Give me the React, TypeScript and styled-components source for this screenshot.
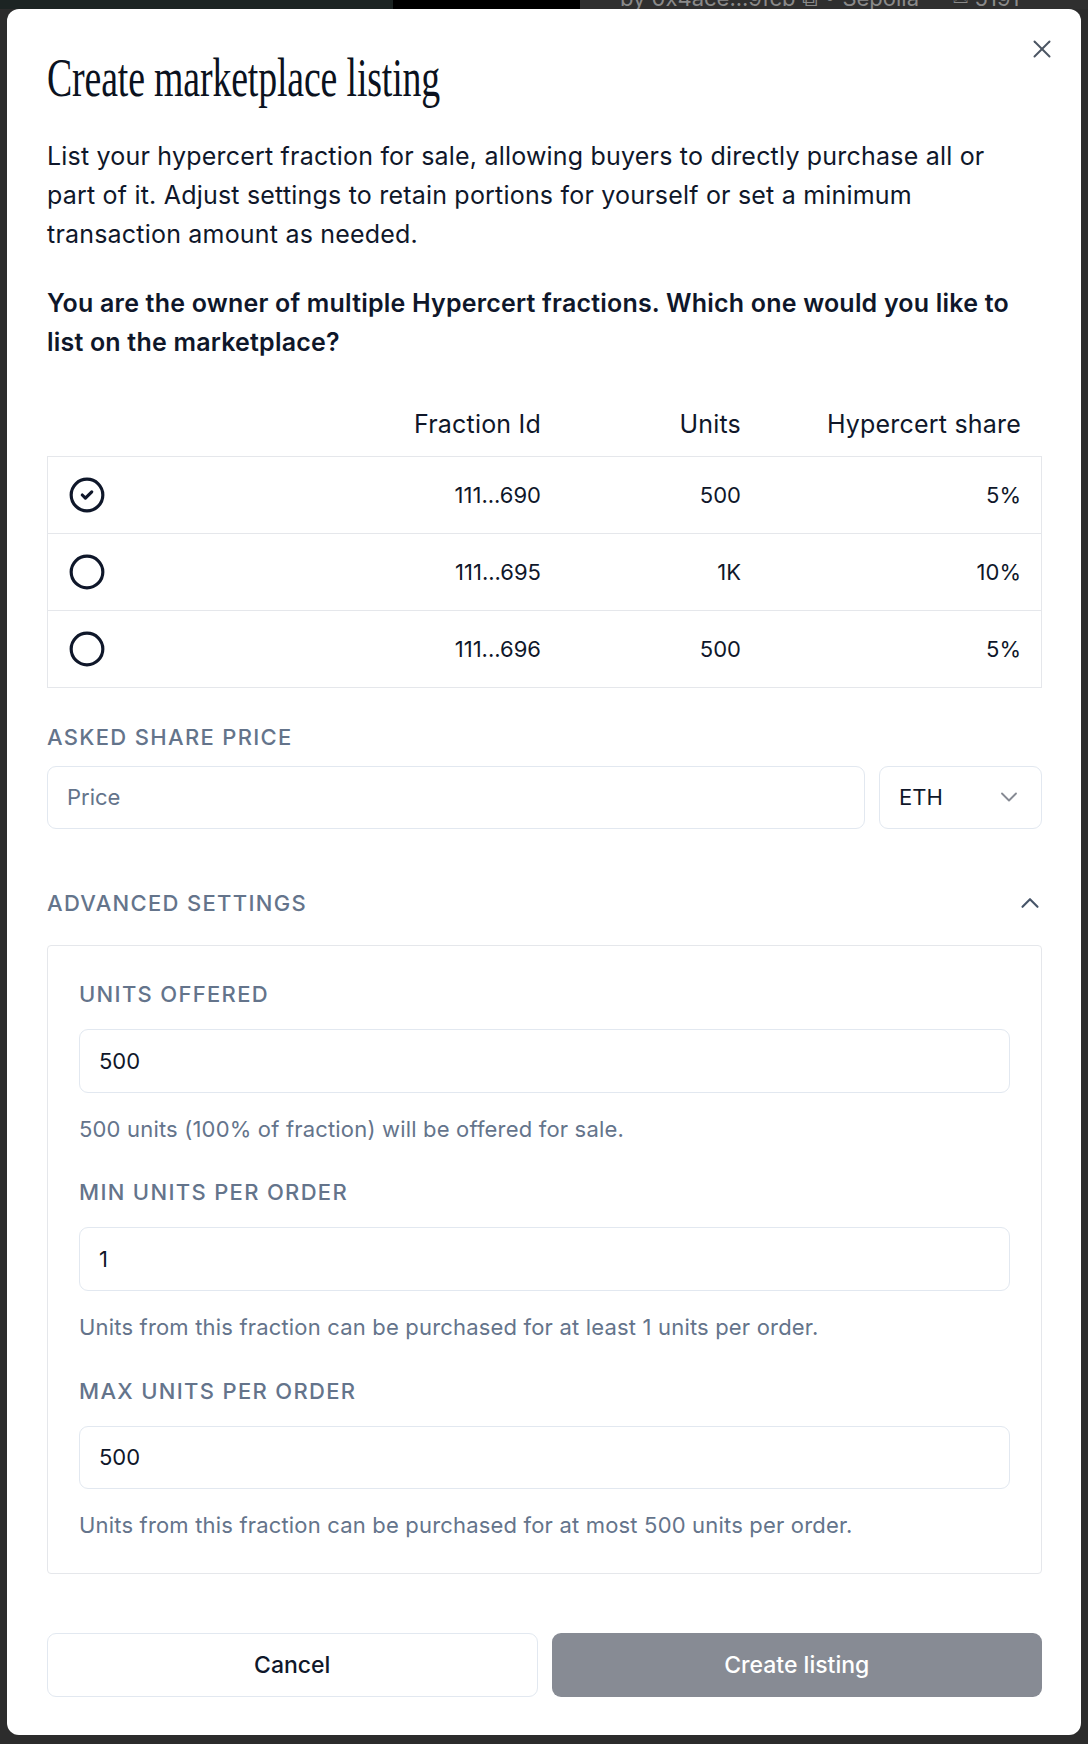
import React, { useState } from "react";
import styled, { createGlobalStyle } from "styled-components";
import { Circle, CircleCheck, ChevronDown, ChevronUp, X } from "lucide-react";

const GlobalStyle = createGlobalStyle`
  * { box-sizing: border-box; }
  body {
    margin: 0;
    background: #2c2c2c;
    font-family: Inter, "Noto Sans", sans-serif;
    color: #0f172a;
  }
`;

const Page = styled.div`
  display: flex;
  flex-direction: column;
  min-height: 1744px;
`;

// the page behind the dialog, only a sliver shows above it
const Backdrop = styled.div`
  display: flex;
  height: 9px;
  overflow: hidden;
`;

const BackdropBlock = styled.div<{ $bg: string; $width?: number }>`
  background: ${(p) => p.$bg};
  width: ${(p) => (p.$width ? `${p.$width}px` : "auto")};
  flex: ${(p) => (p.$width ? "none" : "1")};
  padding-left: 40px;
`;

const BackdropText = styled.div`
  margin-top: -17px;
  font-size: 22px;
  line-height: 30px;
  color: #8a8a8a;
  white-space: nowrap;
`;

const Modal = styled.div`
  position: relative;
  margin: 0 7px 10px;
  background: #ffffff;
  border-radius: 12px;
  padding: 40px 39px 38px 40px;
  display: flex;
  flex-direction: column;
`;

const CloseButton = styled.button`
  position: absolute;
  top: 25px;
  right: 24px;
  width: 30px;
  height: 30px;
  padding: 0;
  border: none;
  background: none;
  color: #4b5563;
  display: flex;
  align-items: center;
  justify-content: center;
  cursor: pointer;

  svg {
    flex: none;
  }
`;

const Title = styled.h2`
  margin: 2px 0 0;
  font-family: "Liberation Serif", "Times New Roman", serif;
  font-weight: 400;
  font-size: 54px;
  line-height: 54px;
  letter-spacing: -0.2px;
  color: #0b1220;
  white-space: nowrap;
  transform: scaleX(0.7);
  transform-origin: left center;
`;

const Paragraph = styled.p<{ $bold?: boolean; $top: number }>`
  margin: ${(p) => p.$top}px 0 0;
  max-width: ${(p) => (p.$bold ? "none" : "975px")};
  font-size: 25px;
  line-height: 38.9px;
  letter-spacing: 0.2px;
  font-weight: ${(p) => (p.$bold ? 600 : 400)};
  color: #0f172a;
`;

const TableHead = styled.div`
  margin-top: 30px;
  height: 64px;
  display: grid;
  grid-template-columns: 1fr 200px 200px 280px;
  align-items: center;
  padding: 0 21px;
  font-size: 25px;
  letter-spacing: 0.2px;
  color: #0f172a;
`;

const TableBox = styled.div`
  border: 1px solid #e5e7eb;
`;

const TableRow = styled.div`
  height: 77px;
  display: grid;
  grid-template-columns: 1fr 200px 200px 280px;
  align-items: center;
  padding: 0 20px;
  font-size: 22px;
  color: #0f172a;
  border-top: 1px solid #e5e7eb;
  cursor: pointer;

  &:first-child {
    border-top: none;
    height: 76px;
  }
`;

const Cell = styled.div<{ $right?: boolean }>`
  display: flex;
  justify-content: ${(p) => (p.$right ? "flex-end" : "flex-start")};
  align-items: center;
`;

const Label = styled.div<{ $top: number }>`
  margin-top: ${(p) => p.$top}px;
  font-size: 22px;
  line-height: 30px;
  letter-spacing: 0.06em;
  text-transform: uppercase;
  color: #64748b;
  font-weight: 500;
`;

const PriceRow = styled.div`
  margin-top: 14px;
  display: flex;
  gap: 14px;
`;

const Input = styled.input<{ $height?: number }>`
  flex: 1;
  width: 100%;
  height: ${(p) => p.$height ?? 64}px;
  border: 1px solid #e2e8f0;
  border-radius: 9px;
  padding: 0 19px;
  font-family: Inter, "Noto Sans", sans-serif;
  font-size: 22px;
  color: #0f172a;
  outline: none;
  background: #fff;

  &::placeholder {
    color: #64748b;
  }
`;

const Select = styled.button`
  width: 163px;
  height: 63px;
  border: 1px solid #e2e8f0;
  border-radius: 9px;
  background: #fff;
  padding: 0 18px 0 19px;
  display: flex;
  align-items: center;
  justify-content: space-between;
  font-family: Inter, "Noto Sans", sans-serif;
  font-size: 22px;
  color: #0f172a;
  cursor: pointer;

  svg {
    flex: none;
    opacity: 0.5;
  }
`;

const AdvancedHeader = styled.button`
  margin-top: 59px;
  height: 30px;
  padding: 0;
  border: none;
  background: none;
  display: flex;
  align-items: center;
  justify-content: space-between;
  cursor: pointer;
  font-family: Inter, "Noto Sans", sans-serif;
  color: #475569;

  svg {
    flex: none;
    margin-right: -3px;
  }
`;

const AdvancedTitle = styled.span`
  font-size: 22px;
  letter-spacing: 0.06em;
  text-transform: uppercase;
  color: #64748b;
  font-weight: 500;
`;

const AdvancedBox = styled.div`
  margin-top: 27px;
  border: 1px solid #e5e7eb;
  border-radius: 4px;
  padding: 0 31px 33px;
  display: flex;
  flex-direction: column;
`;

const FieldInput = styled(Input)`
  margin-top: 20px;
  flex: none;
`;

const Help = styled.div`
  margin-top: 21px;
  font-size: 22px;
  line-height: 30px;
  letter-spacing: 0.18px;
  color: #64748b;
`;

const Footer = styled.div`
  margin-top: 59px;
  display: grid;
  grid-template-columns: 1fr 1fr;
  gap: 14px;
`;

const Button = styled.button<{ $primary?: boolean }>`
  height: 64px;
  border-radius: 9px;
  border: ${(p) => (p.$primary ? "none" : "1px solid #e2e8f0")};
  background: ${(p) => (p.$primary ? "#878b94" : "#ffffff")};
  color: ${(p) => (p.$primary ? "#ffffff" : "#0f172a")};
  font-family: Inter, "Noto Sans", sans-serif;
  font-size: 23px;
  font-weight: 500;
  cursor: ${(p) => (p.$primary ? "not-allowed" : "pointer")};
`;

const fractions = [
  { id: "111...690", units: "500", share: "5%" },
  { id: "111...695", units: "1K", share: "10%" },
  { id: "111...696", units: "500", share: "5%" },
];

export default function App() {
  const [selected, setSelected] = useState(0);
  const [open, setOpen] = useState(true);

  return (
    <Page>
      <GlobalStyle />
      <Backdrop>
        <BackdropBlock $bg="#1c2423" $width={393} />
        <BackdropBlock $bg="#000000" $width={187} />
        <BackdropBlock $bg="#2f2f2f">
          <BackdropText>by 0x4ace...9fcb ⧉ • Sepolia — ✉ 5191</BackdropText>
        </BackdropBlock>
      </Backdrop>

      <Modal>
        <CloseButton aria-label="Close">
          <X size={30} strokeWidth={1.6} />
        </CloseButton>

        <Title>Create marketplace listing</Title>

        <Paragraph $top={32}>
          List your hypercert fraction for sale, allowing buyers to directly
          purchase all or part of it. Adjust settings to retain portions for
          yourself or set a minimum transaction amount as needed.
        </Paragraph>

        <Paragraph $top={30} $bold>
          You are the owner of multiple Hypercert fractions. Which one would
          you like to list on the marketplace?
        </Paragraph>

        <TableHead>
          <Cell />
          <Cell $right>Fraction Id</Cell>
          <Cell $right>Units</Cell>
          <Cell $right>Hypercert share</Cell>
        </TableHead>
        <TableBox>
          {fractions.map((f, i) => (
            <TableRow key={f.id} onClick={() => setSelected(i)}>
              <Cell>
                {selected === i ? (
                  <CircleCheck size={38} strokeWidth={2} color="#0f172a" />
                ) : (
                  <Circle size={38} strokeWidth={2} color="#0f172a" />
                )}
              </Cell>
              <Cell $right>{f.id}</Cell>
              <Cell $right>{f.units}</Cell>
              <Cell $right>{f.share}</Cell>
            </TableRow>
          ))}
        </TableBox>

        <Label $top={34}>Asked share price</Label>
        <PriceRow>
          <Input $height={63} placeholder="Price" />
          <Select>
            ETH
            <ChevronDown size={28} strokeWidth={1.6} color="#0f172a" />
          </Select>
        </PriceRow>

        <AdvancedHeader onClick={() => setOpen(!open)}>
          <AdvancedTitle>Advanced settings</AdvancedTitle>
          <ChevronUp size={30} strokeWidth={1.7} />
        </AdvancedHeader>

        {open && (
          <AdvancedBox>
            <Label $top={33}>Units offered</Label>
            <FieldInput defaultValue="500" />
            <Help>500 units (100% of fraction) will be offered for sale.</Help>

            <Label $top={33}>Min units per order</Label>
            <FieldInput defaultValue="1" />
            <Help>
              Units from this fraction can be purchased for at least 1 units
              per order.
            </Help>

            <Label $top={34}>Max units per order</Label>
            <FieldInput defaultValue="500" $height={63} />
            <Help>
              Units from this fraction can be purchased for at most 500 units
              per order.
            </Help>
          </AdvancedBox>
        )}

        <Footer>
          <Button>Cancel</Button>
          <Button $primary disabled>
            Create listing
          </Button>
        </Footer>
      </Modal>
    </Page>
  );
}
